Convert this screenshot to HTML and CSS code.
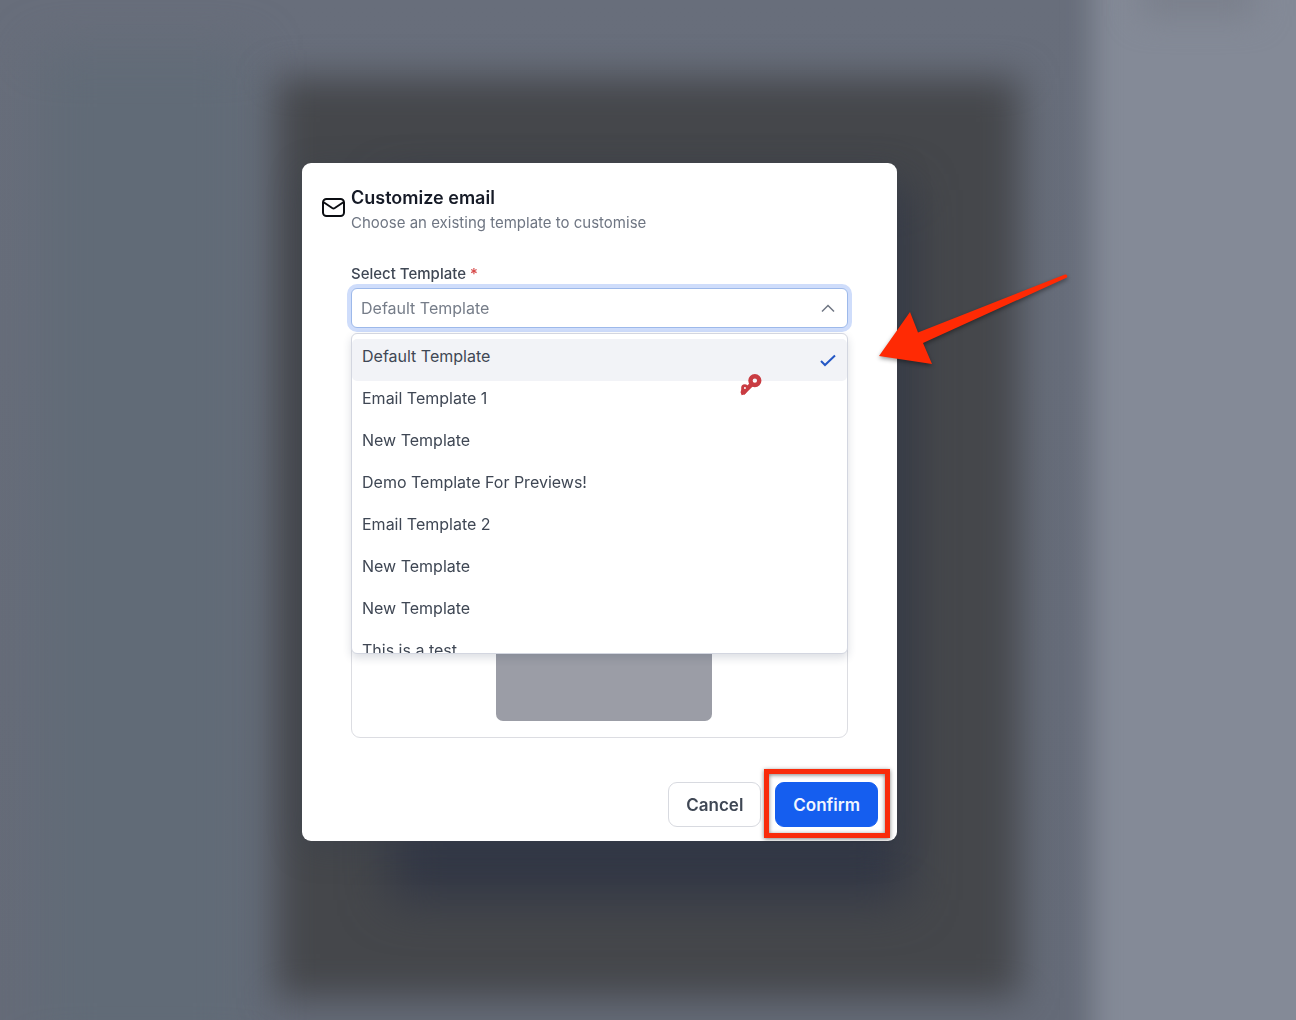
FILE: index.html
```html
<!DOCTYPE html>
<html lang="en">
<head>
<meta charset="utf-8">
<meta name="viewport" content="width=device-width, initial-scale=1">
<title>Customize email</title>
<link rel="stylesheet" href="styles.css">
</head>
<body>
<div class="backdrop" aria-hidden="true">
  <div class="backdrop-left"></div>
  <div class="backdrop-panel"></div>
  <div class="backdrop-glow"></div>
  <div class="backdrop-side"></div>
  <div class="backdrop-smudge"></div>
</div>
<main class="stage">
  <section class="modal" role="dialog" aria-labelledby="modal-title">
    <header class="modal-header">
      <svg class="mail-icon" viewBox="0 0 24 24" aria-hidden="true">
        <rect x="2" y="3" width="21" height="17" rx="3.500"/>
        <path d="M3 6.500 11.200 12q1.300.8 2.600 0L22 6.500"/>
      </svg>
      <div>
        <h1 class="modal-title" id="modal-title">Customize email</h1>
        <p class="modal-subtitle">Choose an existing template to customise</p>
      </div>
    </header>
    <div class="modal-body">
      <label class="field-label" for="template">Select Template <span class="required">*</span></label>
      <div class="field">
        <select class="select" id="template">
          <option>Default Template</option>
        </select>
        <svg class="chevron" viewBox="0 0 16 16" aria-hidden="true"><path d="M2 11.500 8 5.500l6 6"/></svg>
        <div class="dropdown">
          <ul class="options" role="listbox" aria-label="Templates">
            <li class="option option-selected" role="option" aria-selected="true">Default Template
              <svg class="check" viewBox="0 0 16 16" aria-hidden="true"><path d="m1 9 4 4L15 3.500"/></svg>
            </li>
            <li class="option" role="option">Email Template 1</li>
            <li class="option" role="option">New Template</li>
            <li class="option" role="option">Demo Template For Previews!</li>
            <li class="option" role="option">Email Template 2</li>
            <li class="option" role="option">New Template</li>
            <li class="option" role="option">New Template</li>
            <li class="option" role="option">This is a test.</li>
          </ul>
          <svg class="key" viewBox="0 0 20 20" aria-hidden="true">
            <circle cx="13.500" cy="6" r="4"/>
            <path d="M11 9 2.500 17.500"/>
            <circle class="key-bit" cx="4.300" cy="12.500" r="3.200"/>
            <path class="key-bit" d="M1.500 13 .5 16.500 1.500 19.300l3-.8 2-2.500 2.500-3z"/>
            <circle class="key-hole" cx="4.500" cy="12.800" r=".9"/>
          </svg>
        </div>
      </div>
      <div class="preview"><div class="preview-block"></div></div>
    </div>
    <footer class="modal-footer">
      <button class="button" type="button">Cancel</button>
      <div class="highlighted">
        <button class="button button-primary" type="button">Confirm</button>
      </div>
    </footer>
    <svg class="arrow" viewBox="0 0 200 100" aria-hidden="true">
      <path d="M4 86 35 42l8 20.500L190 4.500q3-.5 2 3L48 73l9 21Z"/>
    </svg>
  </section>
</main>
</body>
</html>
```
FILE: styles.css
```css
* { box-sizing: border-box; }

body {
  margin: 0;
  font-family: Inter, "Liberation Sans", sans-serif;
  color: #3f4754;
  background: #676d7a;
}

/* Blurred page behind the dialog */
.backdrop {
  position: fixed;
  inset: 0;
  overflow: hidden;
  background: linear-gradient(#686e7b, #656b78);
}
.backdrop > div { position: absolute; }
.backdrop-left {
  inset: 50px auto -40px 40px;
  width: 210px;
  background: #616b77;
  filter: blur(24px);
}
.backdrop-panel {
  inset: 78px 276px 22px;
  background: #45474b;
  filter: blur(18px);
}
.backdrop-glow {
  inset: 190px 390px 120px;
  background: #323745;
  filter: blur(24px);
}
.backdrop-side {
  inset: -40px -40px -40px 1092px;
  background: #848a97;
  filter: blur(14px);
}
.backdrop-smudge {
  inset: -24px 40px auto 1140px;
  height: 40px;
  background: #7a7f8b;
  filter: blur(16px);
}

.stage {
  position: relative;
  display: grid;
  place-items: center;
  min-height: 100vh;
  padding: 0 97px 16px 0;
  overflow: hidden;
}

.modal {
  position: relative;
  width: 100%;
  max-width: 595px;
  background: #fff;
  border-radius: 9px;
  box-shadow: 0 8px 32px rgba(55, 62, 76, .4);
}

.modal-header {
  display: flex;
  align-items: center;
  gap: 6px;
  padding: 22px 19px 0;
}
.mail-icon {
  flex: none;
  width: 24px;
  height: 24px;
  margin-bottom: 4px;
  fill: none;
  stroke: #0b0d12;
  stroke-width: 2;
  stroke-linecap: round;
}
.modal-title {
  margin: 0;
  font-size: 18px;
  line-height: 26px;
  font-weight: 600;
  color: #151a26;
}
.modal-subtitle {
  margin: 0;
  font-size: 15px;
  line-height: 24px;
  color: #6f7683;
}

.modal-body { padding: 29px 49px 0; }
.field-label {
  display: block;
  font-size: 15px;
  line-height: 20px;
  font-weight: 500;
}
.required { color: #d64545; }

.field {
  position: relative;
  margin-top: 4px;
}
.select {
  display: block;
  width: 100%;
  height: 40px;
  padding: 0 40px 1px 9px;
  appearance: none;
  font: inherit;
  font-size: 16px;
  color: #767d89;
  background: #fff;
  border: 1px solid #9db9ea;
  border-radius: 6px;
  outline: none;
  box-shadow: 0 0 0 4px #cfddfb;
}
.chevron {
  position: absolute;
  top: 12px;
  right: 12px;
  width: 16px;
  height: 16px;
  fill: none;
  stroke: #6f7683;
  stroke-width: 1.500;
}

.dropdown {
  position: absolute;
  top: 100%;
  left: 0;
  right: 0;
  z-index: 1;
  height: 321px;
  margin-top: 5px;
  padding-top: 5px;
  overflow: hidden;
  background: #fff;
  border: 1px solid #d3d6e0;
  border-radius: 6px;
  box-shadow: 0 4px 8px rgba(40, 48, 80, .16);
}
.options {
  margin: 0;
  padding: 0;
  list-style: none;
}
.option {
  display: flex;
  justify-content: space-between;
  height: 42px;
  padding: 5px 11px 0 10px;
  font-size: 16px;
  line-height: 24px;
}
.option-selected {
  background: #f2f3f7;
  border-radius: 5px;
}
.check {
  width: 16px;
  height: 16px;
  margin-top: 8px;
  fill: none;
  stroke: #2457c5;
  stroke-width: 2;
}
.key {
  position: absolute;
  top: 40px;
  right: 85px;
  width: 22px;
  height: 22px;
  fill: none;
  stroke: #c93c42;
  stroke-width: 4;
}
.key-bit {
  fill: #c93c42;
  stroke: none;
}
.key-hole {
  fill: #fff;
  stroke: none;
}

.preview {
  display: flex;
  justify-content: center;
  align-items: flex-end;
  height: 350px;
  margin-top: 60px;
  padding: 0 0 16px 8px;
  border: 1px solid #dcdde2;
  border-radius: 9px;
}
.preview-block {
  width: 216px;
  height: 240px;
  background: #9b9da6;
  border-radius: 7px;
}

.modal-footer {
  display: flex;
  justify-content: flex-end;
  gap: 14px;
  padding: 44px 19px 14px;
}
.button {
  display: block;
  height: 45px;
  padding: 0 17px;
  font: inherit;
  font-size: 17px;
  font-weight: 600;
  color: #3f4754;
  background: #fff;
  border: 1px solid #d8dae0;
  border-radius: 9px;
}
.button-primary {
  color: #f1f5ff;
  background: #155eef;
  border-color: #155eef;
}
.highlighted { position: relative; }
.highlighted::after {
  content: "";
  position: absolute;
  inset: -13px -12px -11px -11px;
  border: 5px solid #f92b0b;
  filter: drop-shadow(0 1px 2px rgba(0, 0, 0, .5));
  pointer-events: none;
}

.arrow {
  position: absolute;
  top: 107px;
  left: 573px;
  z-index: 2;
  width: 200px;
  height: 100px;
  overflow: visible;
  fill: #ff2a04;
  filter: drop-shadow(0 2px 2px rgba(0, 0, 0, .4));
}
```
